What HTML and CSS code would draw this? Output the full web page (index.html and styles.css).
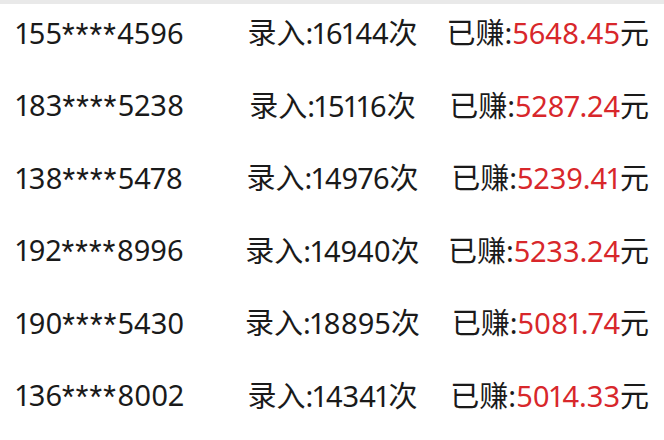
FILE: index.html
```html
<!DOCTYPE html>
<html lang="zh-CN">
<head>
<meta charset="utf-8">
<link rel="stylesheet" href="styles.css">
</head>
<body>
<div class="topbar"></div>
<ul class="list">
  <li class="row"><span class="phone">155<span class="mask">****</span>4596</span><span class="count">录入:16144次</span><span class="earn">已赚:<em>5648.45</em>元</span></li>
  <li class="row"><span class="phone">183<span class="mask">****</span>5238</span><span class="count">录入:15116次</span><span class="earn">已赚:<em>5287.24</em>元</span></li>
  <li class="row"><span class="phone">138<span class="mask">****</span>5478</span><span class="count">录入:14976次</span><span class="earn">已赚:<em>5239.41</em>元</span></li>
  <li class="row"><span class="phone">192<span class="mask">****</span>8996</span><span class="count">录入:14940次</span><span class="earn">已赚:<em>5233.24</em>元</span></li>
  <li class="row"><span class="phone">190<span class="mask">****</span>5430</span><span class="count">录入:18895次</span><span class="earn">已赚:<em>5081.74</em>元</span></li>
  <li class="row"><span class="phone">136<span class="mask">****</span>8002</span><span class="count">录入:14341次</span><span class="earn">已赚:<em>5014.33</em>元</span></li>
</ul>
</body>
</html>
```

FILE: styles.css
```css
html, body {
  margin: 0;
  padding: 0;
  background: #ffffff;
}
body {
  width: 664px;
  height: 440px;
  overflow: hidden;
  font-family: "Noto Sans", "Noto Sans CJK SC", sans-serif;
  font-variant-numeric: proportional-nums;
  font-size: 29px;
  color: #1a1a1a;
}
.topbar {
  height: 4px;
  background: #e9e9e9;
}
.list {
  list-style: none;
  margin: 0;
  padding: 0 15px 0 16px;
}
.row {
  display: grid;
  grid-template-columns: 1fr auto 1fr;
  align-items: center;
  height: 72.6px;
  box-sizing: border-box;
  padding-bottom: 14.6px;
  line-height: 40px;
  white-space: nowrap;
}
.phone {
  justify-self: start;
}
.mask {
  font-family: Roboto, sans-serif;
  letter-spacing: 1.3px;
}
.count {
  justify-self: center;
}
.earn {
  justify-self: end;
}
.earn em {
  font-style: normal;
  color: #d8272b;
}
```
